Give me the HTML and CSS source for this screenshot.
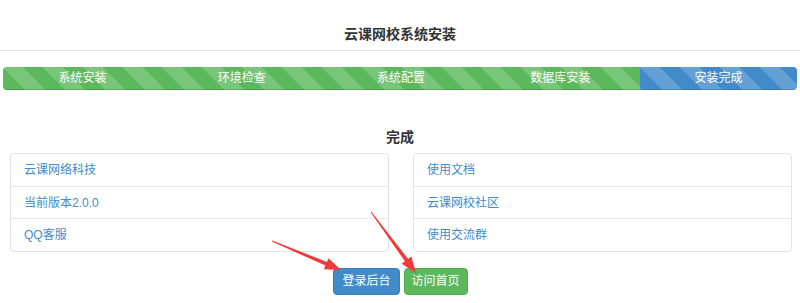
FILE: index.html
```html
<!DOCTYPE html>
<html lang="zh-CN">
<head>
<meta charset="utf-8">
<title>云课网校系统安装</title>
<link rel="stylesheet" href="styles.css">
</head>
<body>
<div class="page">
  <header class="header">
    <h1 class="title">云课网校系统安装</h1>
  </header>
  <div class="progress">
    <div class="bar bar-green">系统安装</div>
    <div class="bar bar-green">环境检查</div>
    <div class="bar bar-green">系统配置</div>
    <div class="bar bar-green">数据库安装</div>
    <div class="bar bar-blue">安装完成</div>
  </div>
  <h2 class="done">完成</h2>
  <div class="lists">
    <ul class="list">
      <li class="item">云课网络科技</li>
      <li class="item">当前版本2.0.0</li>
      <li class="item">QQ客服</li>
    </ul>
    <ul class="list">
      <li class="item">使用文档</li>
      <li class="item">云课网校社区</li>
      <li class="item">使用交流群</li>
    </ul>
  </div>
  <div class="actions">
    <a class="btn btn-blue">登录后台</a>
    <a class="btn btn-green">访问首页</a>
  </div>
  <svg class="arrows" width="800" height="303" viewBox="0 0 800 303">
    <polygon fill="#f2393a" points="272.2,240.5 327.0,262.0 328.5,258.3 341,270 323.9,269.3 325.4,265.6 271.8,241.5"/>
    <polygon fill="#f2393a" points="371.4,211.7 408.1,258.9 411.3,256.5 416,273 401.7,263.7 404.9,261.3 370.6,212.3"/>
  </svg>
</div>
</body>
</html>
```

FILE: styles.css
```css
* { box-sizing: border-box; }
html, body { margin: 0; padding: 0; background: #fff; }
body {
  font-family: "Liberation Sans", "Noto Sans CJK SC", sans-serif;
  font-size: 12px;
  color: #333;
}
.page { position: relative; width: 800px; height: 303px; overflow: hidden; }
.header {
  padding-top: 26px;
  padding-bottom: 8px;
  border-bottom: 1px solid #e2e2e2;
}
.title {
  margin: 0;
  text-align: center;
  font-size: 14px;
  line-height: 16px;
  font-weight: bold;
  color: #333;
}
.progress {
  display: flex;
  margin: 16px 3px 0;
  height: 23px;
  border-radius: 4px;
  overflow: hidden;
  background: #f5f5f5;
  box-shadow: inset 0 1px 2px rgba(0,0,0,.1);
}
.bar {
  flex: 1 1 0;
  color: #fff;
  text-align: center;
  line-height: 23px;
  font-size: 12px;
  background-image: linear-gradient(45deg, rgba(255,255,255,.18) 25%, transparent 25%, transparent 50%, rgba(255,255,255,.18) 50%, rgba(255,255,255,.18) 75%, transparent 75%, transparent);
  background-size: 40px 40px;
  box-shadow: inset 0 -1px 0 rgba(0,0,0,.15);
}
.bar-green { background-color: #5cb85c; }
.bar-blue { background-color: #428bca; flex: 0 0 157px; }
.done {
  margin: 39px 0 0;
  text-align: center;
  font-size: 14px;
  line-height: 16px;
  font-weight: bold;
  color: #333;
}
.lists {
  display: grid;
  grid-template-columns: 1fr 1fr;
  gap: 24px;
  padding: 0 8px 0 10px;
  margin-top: 8px;
}
.list {
  list-style: none;
  margin: 0;
  padding: 0;
  border: 1px solid #e3e3e3;
  border-radius: 4px;
}
.item {
  height: 32px;
  line-height: 32px;
  padding: 0 13px;
  color: #428bca;
  font-size: 12px;
}
.item + .item { border-top: 1px solid #e8e8e8; }
.item:last-child { height: 33px; }
.actions {
  display: flex;
  justify-content: center;
  gap: 4px;
  margin-top: 16px;
  padding-left: 1px;
}
.btn {
  display: inline-block;
  height: 27px;
  padding: 0 8px;
  border-radius: 4px;
  color: #fff;
  font-size: 12px;
  text-decoration: none;
}
.btn-blue { background: #428bca; border: 1px solid #357ebd; line-height: 25px; padding: 0 8px; }
.btn-green { background: #5cb85c; border: 1px solid #4cae4c; line-height: 25px; padding: 0 7px; }
.arrows { position: absolute; left: 0; top: 0; pointer-events: none; }
```
